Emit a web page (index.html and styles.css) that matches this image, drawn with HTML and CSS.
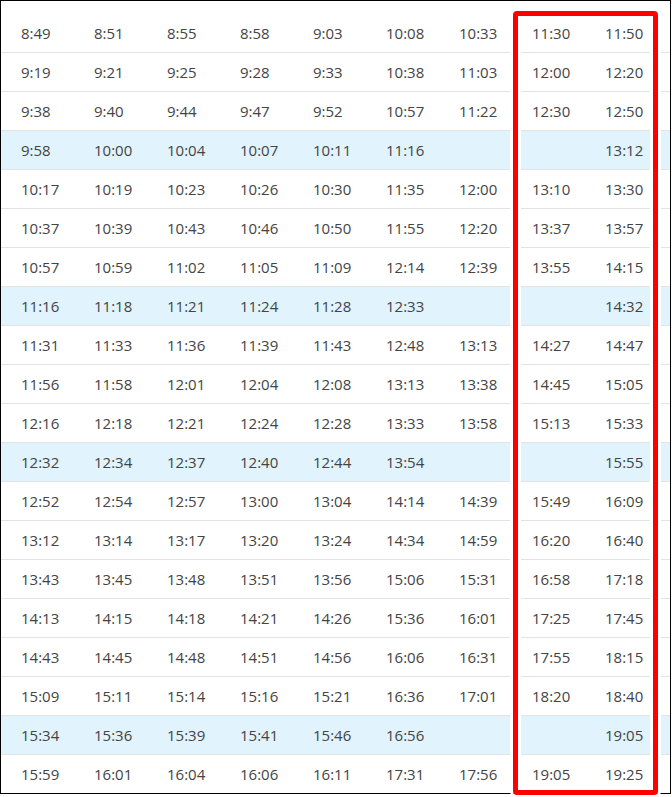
FILE: index.html
```html
<!DOCTYPE html>
<html>
<head>
<meta charset="utf-8">
<link rel="stylesheet" href="styles.css">
</head>
<body>
<div class="wrap">
  <div class="frame">
    <table class="times">
      <tbody>
        <tr><td>8:49</td><td>8:51</td><td>8:55</td><td>8:58</td><td>9:03</td><td>10:08</td><td>10:33</td><td>11:30</td><td>11:50</td><td></td></tr>
        <tr><td>9:19</td><td>9:21</td><td>9:25</td><td>9:28</td><td>9:33</td><td>10:38</td><td>11:03</td><td>12:00</td><td>12:20</td><td></td></tr>
        <tr><td>9:38</td><td>9:40</td><td>9:44</td><td>9:47</td><td>9:52</td><td>10:57</td><td>11:22</td><td>12:30</td><td>12:50</td><td></td></tr>
        <tr class="hl"><td>9:58</td><td>10:00</td><td>10:04</td><td>10:07</td><td>10:11</td><td>11:16</td><td></td><td></td><td>13:12</td><td></td></tr>
        <tr><td>10:17</td><td>10:19</td><td>10:23</td><td>10:26</td><td>10:30</td><td>11:35</td><td>12:00</td><td>13:10</td><td>13:30</td><td></td></tr>
        <tr><td>10:37</td><td>10:39</td><td>10:43</td><td>10:46</td><td>10:50</td><td>11:55</td><td>12:20</td><td>13:37</td><td>13:57</td><td></td></tr>
        <tr><td>10:57</td><td>10:59</td><td>11:02</td><td>11:05</td><td>11:09</td><td>12:14</td><td>12:39</td><td>13:55</td><td>14:15</td><td></td></tr>
        <tr class="hl"><td>11:16</td><td>11:18</td><td>11:21</td><td>11:24</td><td>11:28</td><td>12:33</td><td></td><td></td><td>14:32</td><td></td></tr>
        <tr><td>11:31</td><td>11:33</td><td>11:36</td><td>11:39</td><td>11:43</td><td>12:48</td><td>13:13</td><td>14:27</td><td>14:47</td><td></td></tr>
        <tr><td>11:56</td><td>11:58</td><td>12:01</td><td>12:04</td><td>12:08</td><td>13:13</td><td>13:38</td><td>14:45</td><td>15:05</td><td></td></tr>
        <tr><td>12:16</td><td>12:18</td><td>12:21</td><td>12:24</td><td>12:28</td><td>13:33</td><td>13:58</td><td>15:13</td><td>15:33</td><td></td></tr>
        <tr class="hl"><td>12:32</td><td>12:34</td><td>12:37</td><td>12:40</td><td>12:44</td><td>13:54</td><td></td><td></td><td>15:55</td><td></td></tr>
        <tr><td>12:52</td><td>12:54</td><td>12:57</td><td>13:00</td><td>13:04</td><td>14:14</td><td>14:39</td><td>15:49</td><td>16:09</td><td></td></tr>
        <tr><td>13:12</td><td>13:14</td><td>13:17</td><td>13:20</td><td>13:24</td><td>14:34</td><td>14:59</td><td>16:20</td><td>16:40</td><td></td></tr>
        <tr><td>13:43</td><td>13:45</td><td>13:48</td><td>13:51</td><td>13:56</td><td>15:06</td><td>15:31</td><td>16:58</td><td>17:18</td><td></td></tr>
        <tr><td>14:13</td><td>14:15</td><td>14:18</td><td>14:21</td><td>14:26</td><td>15:36</td><td>16:01</td><td>17:25</td><td>17:45</td><td></td></tr>
        <tr><td>14:43</td><td>14:45</td><td>14:48</td><td>14:51</td><td>14:56</td><td>16:06</td><td>16:31</td><td>17:55</td><td>18:15</td><td></td></tr>
        <tr><td>15:09</td><td>15:11</td><td>15:14</td><td>15:16</td><td>15:21</td><td>16:36</td><td>17:01</td><td>18:20</td><td>18:40</td><td></td></tr>
        <tr class="hl"><td>15:34</td><td>15:36</td><td>15:39</td><td>15:41</td><td>15:46</td><td>16:56</td><td></td><td></td><td>19:05</td><td></td></tr>
        <tr><td>15:59</td><td>16:01</td><td>16:04</td><td>16:06</td><td>16:11</td><td>17:31</td><td>17:56</td><td>19:05</td><td>19:25</td><td></td></tr>
      </tbody>
    </table>
  </div>
  <div class="mark"></div>
</div>
</body>
</html>
```

FILE: styles.css
```css
html, body {
  margin: 0;
  padding: 0;
  background: #fff;
}
.wrap {
  position: relative;
  width: 672px;
  height: 797px;
}
.frame {
  box-sizing: border-box;
  width: 671px;
  height: 794px;
  border: 1px solid #000;
  padding-top: 13px;
  overflow: hidden;
}
.times {
  border-collapse: separate;
  border-spacing: 0;
  table-layout: fixed;
  width: 730px;
  font-family: "Open Sans", "Noto Sans", sans-serif;
  font-size: 15px;
  color: #444;
}
.times td {
  width: 53px;
  height: 38px;
  padding: 0 0 0 20px;
  line-height: 38px;
  text-align: left;
  border-bottom: 1px solid #e3e3e3;
  white-space: nowrap;
}
.times tr.hl td {
  background: #e1f3fc;
}
.mark {
  position: absolute;
  left: 513px;
  top: 11px;
  width: 135px;
  height: 774px;
  border: 5px solid #f00;
  border-radius: 4px;
  box-shadow: 0 0 0 3px #fff, inset 0 0 0 3px #fff;
}
```
